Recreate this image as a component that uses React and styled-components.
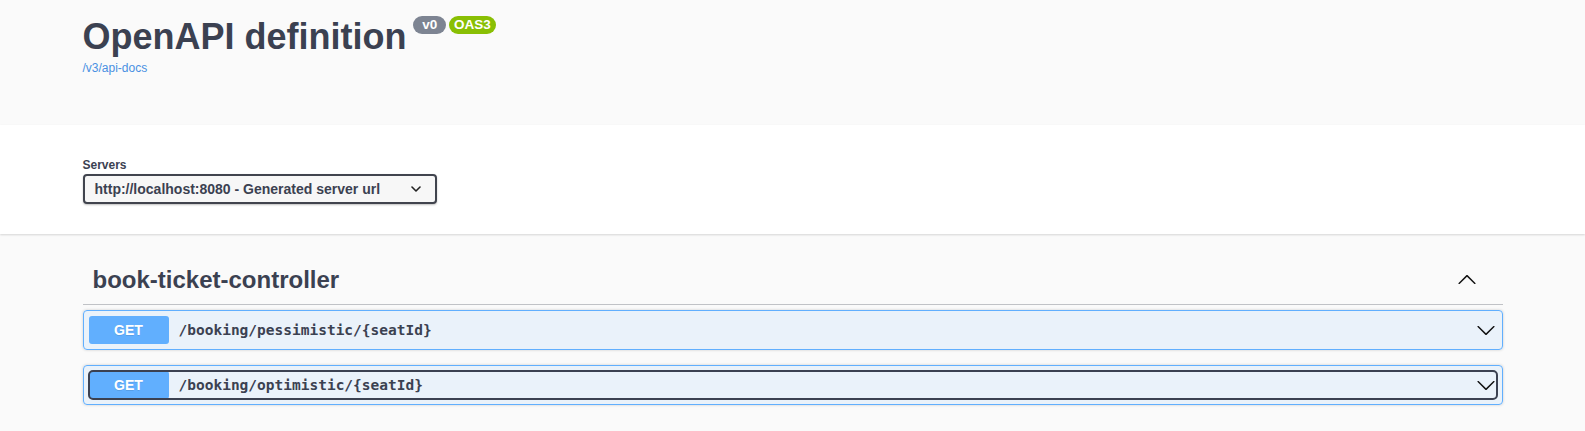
import React from "react";
import styled, { createGlobalStyle } from "styled-components";

const GlobalStyle = createGlobalStyle`
  html, body {
    margin: 0;
    padding: 0;
    background: #fafafa;
  }
  body {
    font-family: "Liberation Sans", Arial, sans-serif;
    color: #3b4151;
  }
  * { box-sizing: border-box; }
`;

const Page = styled.div`
  min-height: 431px;
  background: #fafafa;
`;

const Wrapper = styled.div`
  max-width: 1460px;
  margin: 0 auto;
  padding: 0 20px;
`;

const InfoSection = styled.section`
  height: 125px;
  background: #fafafa;
`;

const TitleRow = styled.div`
  display: flex;
  align-items: flex-start;
  padding-top: 17px;
`;

const Title = styled.h2`
  margin: 0;
  font-size: 36px;
  line-height: 40px;
  font-weight: 700;
  color: #3b4151;
`;

const Badge = styled.span`
  display: inline-block;
  margin-top: -1px;
  margin-left: ${(p) => p.$gap}px;
  padding: 1px 5px;
  border-radius: 57px;
  background: ${(p) => p.$bg};
  color: #fff;
  font-size: 13.5px;
  font-weight: 700;
  line-height: 16px;
  white-space: pre;
`;

const DocsLink = styled.a`
  display: inline-block;
  margin-top: 4px;
  font-size: 12px;
  line-height: 14px;
  color: #4990e2;
  text-decoration: none;
`;

const SchemeSection = styled.section`
  background: #fff;
  box-shadow: 0 1px 2px 0 rgba(0, 0, 0, 0.15);
  padding: 33px 0 30px;
`;

const ServersLabel = styled.span`
  display: block;
  font-size: 12px;
  font-weight: 700;
  line-height: 15px;
  margin-bottom: 1px;
  color: #3b4151;
`;

const SelectBox = styled.div`
  display: flex;
  align-items: center;
  justify-content: space-between;
  width: 354px;
  height: 30px;
  padding: 0 14px 0 10px;
  border: 2px solid #41444e;
  border-radius: 4px;
  background: #f7f7f7;
  box-shadow: 0 1px 2px 0 rgba(0, 0, 0, 0.25);
  font-size: 14px;
  font-weight: 700;
  line-height: 16px;
  color: #3b4151;
`;

const OpsSection = styled.section`
  padding-top: 21px;
`;

const TagHeader = styled.h3`
  display: flex;
  align-items: center;
  margin: 0 0 5px;
  padding: 10px 20px 10px 10px;
  border-bottom: 1px solid rgba(59, 65, 81, 0.3);
`;

const TagTitle = styled.span`
  flex: 1;
  font-size: 24px;
  font-weight: 700;
  line-height: 29px;
  color: #3b4151;
`;

const TagToggle = styled.span`
  display: flex;
  margin-right: 6px;
  margin-top: -2px;
`;

const Opblock = styled.div`
  margin: 0 0 15px;
  padding: 5px;
  border: 1px solid #61affe;
  border-radius: 4px;
  background: rgba(97, 175, 254, 0.1);
  box-shadow: 0 0 3px rgba(0, 0, 0, 0.19);
`;

const Summary = styled.div`
  display: flex;
  align-items: center;
  border-radius: 4px;
  outline: ${(p) => (p.$focused ? "2px solid #3b4151" : "none")};
  outline-offset: -1px;
`;

const Method = styled.span`
  flex-shrink: 0;
  width: 80px;
  padding: 6px 0;
  border-radius: 3px;
  background: #61affe;
  color: #fff;
  font-size: 14px;
  font-weight: 700;
  line-height: 16px;
  text-align: center;
  text-shadow: 0 1px 0 rgba(0, 0, 0, 0.1);
`;

const PathText = styled.span`
  flex: 1;
  padding: 0 10px;
  font-family: "DejaVu Sans Mono", monospace;
  font-size: 14.5px;
  font-weight: 700;
  line-height: 20px;
  color: #3b4151;
`;

const ArrowWrap = styled.span`
  display: flex;
  flex-shrink: 0;
  margin-right: 1px;
`;

const ArrowDown = () => (
  <svg width="20" height="20" viewBox="0 0 20 20">
    <path
      fill="#111"
      d="M17.418 6.109c.272-.268.709-.268.979 0s.271.701 0 .969l-7.908 7.83c-.27.268-.707.268-.979 0l-7.908-7.83c-.27-.268-.27-.701 0-.969.271-.268.709-.268.979 0L10 13.25l7.418-7.141z"
    />
  </svg>
);

const ArrowUp = () => (
  <svg width="20" height="20" viewBox="0 0 20 20">
    <path
      fill="#111"
      d="M17.418 14.908c.272.268.709.268.979 0s.271-.701 0-.969l-7.908-7.83c-.27-.268-.707-.268-.979 0l-7.908 7.83c-.27.268-.27.701 0 .969.271.268.709.268.979 0L10 7.767l7.418 7.141z"
    />
  </svg>
);

const SmallChevron = () => (
  <svg width="10" height="6" viewBox="0 0 10 6">
    <polyline
      points="1,1 5,5 9,1"
      fill="none"
      stroke="#222"
      strokeWidth="1.6"
      strokeLinecap="round"
      strokeLinejoin="round"
    />
  </svg>
);

const operations = [
  { method: "GET", path: "/booking/pessimistic/{seatId}", focused: false },
  { method: "GET", path: "/booking/optimistic/{seatId}", focused: true },
];

export default function App() {
  return (
    <Page>
      <GlobalStyle />
      <InfoSection>
        <Wrapper>
          <TitleRow>
            <Title>OpenAPI definition</Title>
            <Badge $bg="#7d8492" $gap={7}>{" v0 "}</Badge>
            <Badge $bg="#89bf04" $gap={3}>OAS3</Badge>
          </TitleRow>
          <DocsLink href="#">/v3/api-docs</DocsLink>
        </Wrapper>
      </InfoSection>
      <SchemeSection>
        <Wrapper>
          <ServersLabel>Servers</ServersLabel>
          <SelectBox>
            <span>http://localhost:8080 - Generated server url</span>
            <SmallChevron />
          </SelectBox>
        </Wrapper>
      </SchemeSection>
      <OpsSection>
        <Wrapper>
          <TagHeader>
            <TagTitle>book-ticket-controller</TagTitle>
            <TagToggle>
              <ArrowUp />
            </TagToggle>
          </TagHeader>
          {operations.map((op) => (
            <Opblock key={op.path}>
              <Summary $focused={op.focused}>
                <Method>{op.method}</Method>
                <PathText>{op.path}</PathText>
                <ArrowWrap>
                  <ArrowDown />
                </ArrowWrap>
              </Summary>
            </Opblock>
          ))}
        </Wrapper>
      </OpsSection>
    </Page>
  );
}
